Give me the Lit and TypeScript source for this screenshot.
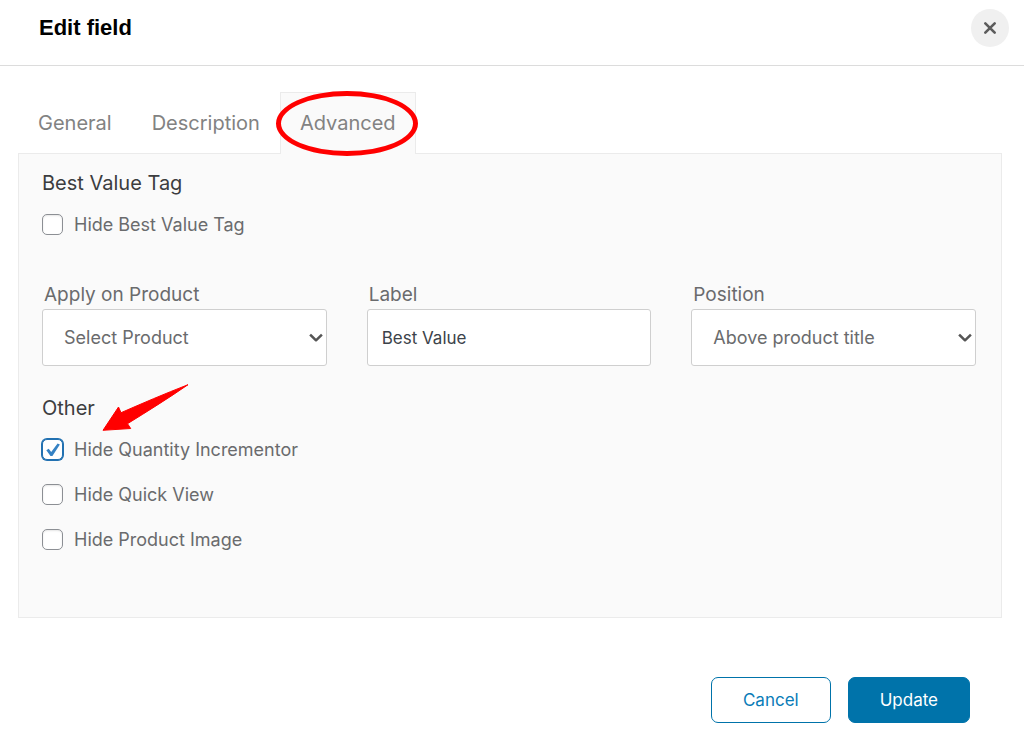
import { LitElement, html, css } from "lit";
import { customElement, property, state } from "lit/decorators.js";
import { classMap } from "lit/directives/class-map.js";

@customElement("check-option")
class CheckOption extends LitElement {
  @property() label = "";
  @property({ type: Boolean }) checked = false;

  static styles = css`
    :host {
      display: block;
    }
    .option {
      display: flex;
      align-items: center;
      gap: 11px;
      color: #6a6b6d;
      font-size: 18px;
      line-height: 23px;
      cursor: pointer;
    }
    .box {
      display: grid;
      flex: none;
    }
    .input,
    .tick {
      grid-area: 1 / 1;
      width: 21px;
      height: 21px;
    }
    .input {
      appearance: none;
      box-sizing: border-box;
      margin: 0;
      border: 1px solid #8c8f94;
      border-radius: 5px;
      background: #fff;
      box-shadow: inset 0 1px 2px rgba(0, 0, 0, 0.1);
      cursor: pointer;
    }
    .input:checked {
      border-color: #2271b1;
      outline: none;
      box-shadow: 0 0 0 1px #2271b1;
    }
    .tick {
      pointer-events: none;
      z-index: 1;
    }
  `;

  private toggle(e: Event) {
    this.checked = (e.target as HTMLInputElement).checked;
  }

  render() {
    return html`
      <label class="option">
        <span class="box">
          <input class="input" type="checkbox" .checked=${this.checked} @change=${this.toggle} />
          ${this.checked
            ? html`<svg class="tick" viewBox="0 0 21 21" aria-hidden="true">
                <path
                  d="M4.3 11.2 6.7 9.7 9.2 13.1 15.6 4.4 17.9 5.6 10.4 17.1 8.5 17.1Z"
                  fill="#3582c4"
                />
              </svg>`
            : ""}
        </span>
        <span>${this.label}</span>
      </label>
    `;
  }
}

@customElement("app-root")
class AppRoot extends LitElement {
  @state() private tab = "Advanced";

  static styles = css`
    :host {
      display: block;
      background: #fff;
      color: #6a6b6d;
      font-family: Inter, "Liberation Sans", sans-serif;
    }
    .header {
      display: flex;
      align-items: center;
      justify-content: space-between;
      padding: 9px 15px 18px 39px;
      border-bottom: 1px solid #dcdcdc;
    }
    .title {
      margin: 0;
      color: #000;
      font: bold 22px/28px "Liberation Sans", Arial, sans-serif;
    }
    .close {
      display: grid;
      place-items: center;
      width: 38px;
      height: 38px;
      padding: 0;
      border: 0;
      border-radius: 50%;
      background: #f0f0f0;
      cursor: pointer;
    }
    .close-icon {
      width: 14px;
      height: 14px;
    }
    .body {
      padding: 26px 22px 0 18px;
    }
    .tabs {
      display: flex;
    }
    .tab {
      position: relative;
      margin: 0 0 -1px;
      padding: 18px 19px;
      border: 1px solid transparent;
      border-bottom: 0;
      background: none;
      color: #828282;
      font: 20px/25px Inter, "Liberation Sans", sans-serif;
      cursor: pointer;
    }
    .tab.active {
      border-color: #ebebeb;
      background: #fafafa;
    }
    .ring {
      position: absolute;
      inset: -2px -3px -2px -5px;
      border: 5px solid #f00;
      border-radius: 50%;
      pointer-events: none;
    }
    .panel {
      padding: 17px 25px 66px 23px;
      border: 1px solid #ebebeb;
      background: #fafafa;
    }
    .heading {
      position: relative;
      margin: 0 0 18px;
      color: #3c3d3f;
      font-size: 20px;
      font-weight: 400;
      line-height: 24px;
    }
    .arrow {
      position: absolute;
      left: 60px;
      top: -12px;
      width: 88px;
      height: 48px;
      pointer-events: none;
    }
    .fields {
      display: grid;
      grid-template-columns: repeat(3, minmax(0, 1fr));
      gap: 40px;
      margin: 47px 0 30px;
    }
    .field {
      display: grid;
      gap: 2px;
    }
    .label {
      padding-left: 2px;
      font-size: 19px;
      line-height: 24px;
    }
    .picker {
      display: grid;
      align-items: center;
    }
    .control {
      box-sizing: border-box;
      width: 100%;
      height: 57px;
      margin: 0;
      border: 1px solid #cfcfcf;
      border-radius: 3px;
      background: #fff;
      font: 18px/24px Inter, "Liberation Sans", sans-serif;
    }
    .select {
      grid-area: 1 / 1;
      appearance: none;
      padding: 0 36px 0 21px;
      color: #6a6b6d;
    }
    .text {
      padding: 0 14px;
      color: #3c434a;
      font-size: 17px;
    }
    .chevron {
      grid-area: 1 / 1;
      justify-self: end;
      width: 14px;
      height: 10px;
      margin-right: 4px;
      pointer-events: none;
    }
    .options {
      display: grid;
      gap: 22px;
    }
    .footer {
      display: flex;
      justify-content: flex-end;
      gap: 17px;
      padding: 59px 54px 21px;
    }
    .button {
      height: 46px;
      padding: 0 31px;
      border: 1px solid #0073aa;
      border-radius: 7px;
      background: #fff;
      color: #0a7cb8;
      font: 17px/24px Inter, "Liberation Sans", sans-serif;
      cursor: pointer;
    }
    .button.primary {
      background: #0073aa;
      color: #fff;
    }
  `;

  private chevron() {
    return html`<svg class="chevron" viewBox="0 0 14 10" aria-hidden="true">
      <path
        d="M2 2.5 7 7.3 12 2.5"
        fill="none"
        stroke="#555"
        stroke-width="2.5"
        stroke-linejoin="round"
        stroke-linecap="square"
      />
    </svg>`;
  }

  render() {
    return html`
      <header class="header">
        <h1 class="title">Edit field</h1>
        <button class="close" type="button" aria-label="Close">
          <svg class="close-icon" viewBox="0 0 14 14" aria-hidden="true">
            <path d="M2.3 2.3 11.7 11.7M11.7 2.3 2.3 11.7" stroke="#5c5c5c" stroke-width="2.6" stroke-linecap="round" />
          </svg>
        </button>
      </header>
      <main class="body">
        <div class="tabs" role="tablist">
          ${["General", "Description", "Advanced"].map(
            (name) => html`<button
              class=${classMap({ tab: true, active: name === this.tab })}
              type="button"
              role="tab"
              aria-selected=${name === this.tab}
              @click=${() => (this.tab = name)}
            >
              ${name}${name === "Advanced" ? html`<span class="ring"></span>` : ""}
            </button>`
          )}
        </div>
        <section class="panel" role="tabpanel">
          <h2 class="heading">Best Value Tag</h2>
          <check-option label="Hide Best Value Tag"></check-option>
          <div class="fields">
            <div class="field">
              <label class="label" for="product">Apply on Product</label>
              <div class="picker">
                <select class="control select" id="product">
                  <option>Select Product</option>
                </select>
                ${this.chevron()}
              </div>
            </div>
            <div class="field">
              <label class="label" for="label">Label</label>
              <input class="control text" id="label" type="text" value="Best Value" />
            </div>
            <div class="field">
              <label class="label" for="position">Position</label>
              <div class="picker">
                <select class="control select" id="position">
                  <option>Above product title</option>
                </select>
                ${this.chevron()}
              </div>
            </div>
          </div>
          <h2 class="heading">
            Other
            <svg class="arrow" viewBox="0 0 88 48" aria-hidden="true">
              <path
                d="M1 46.3 16.5 23 19 28.7C40 19.5 62 10 86 .7 66 14.5 46 27 25.5 39.7L28.7 44.5Z"
                fill="#f00"
                stroke="#f00"
                stroke-linejoin="round"
              />
            </svg>
          </h2>
          <div class="options">
            <check-option label="Hide Quantity Incrementor" checked></check-option>
            <check-option label="Hide Quick View"></check-option>
            <check-option label="Hide Product Image"></check-option>
          </div>
        </section>
      </main>
      <footer class="footer">
        <button class="button" type="button">Cancel</button>
        <button class="button primary" type="button">Update</button>
      </footer>
    `;
  }
}
